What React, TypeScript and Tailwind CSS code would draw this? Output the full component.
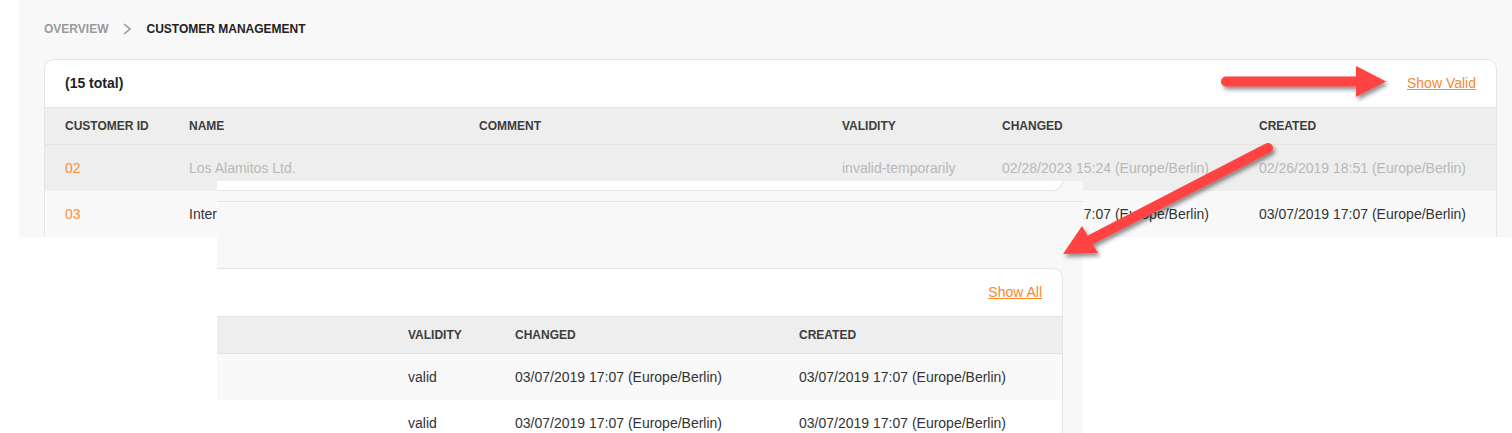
import React from "react";

const ORANGE = "text-[#f7882f]";

function Chevron() {
  return (
    <svg width="10" height="12" viewBox="0 0 10 12" className="mx-[14px]">
      <polyline points="2,1 8,6 2,11" fill="none" stroke="#9a9a9a" strokeWidth="1.6" />
    </svg>
  );
}

const topCols = "grid grid-cols-[124px_290px_363px_160px_257px_1fr] items-center pl-[20px]";
const ovCols = "grid grid-cols-[220px_107px_284px_1fr] items-center";

function TopCard() {
  return (
    <div className="mt-[23px] overflow-hidden rounded-[10px] border border-[#e6e4e0] bg-white">
      <div className="flex h-[47px] items-center justify-between px-[20px]">
        <span className="text-[14px] font-bold text-[#222]">(15 total)</span>
        <span className={`text-[14px] underline ${ORANGE}`}>Show Valid</span>
      </div>
      <div className={`${topCols} h-[38px] border-y border-[#e6e4e0] bg-[#eeeeee] text-[12px] font-bold text-[#3d3d3d]`}>
        <span>CUSTOMER ID</span>
        <span>NAME</span>
        <span>COMMENT</span>
        <span>VALIDITY</span>
        <span>CHANGED</span>
        <span>CREATED</span>
      </div>
      <div className={`${topCols} h-[46px] bg-[#eeeeee] text-[14px] text-[#b8b8b8]`}>
        <span className="text-[#f8903c]">02</span>
        <span>Los Alamitos Ltd.</span>
        <span></span>
        <span>invalid-temporarily</span>
        <span className="whitespace-nowrap">02/28/2023 15:24 (Europe/Berlin)</span>
        <span className="whitespace-nowrap">02/26/2019 18:51 (Europe/Berlin)</span>
      </div>
      <div className={`${topCols} h-[46px] bg-[#f9f9f9] text-[14px] text-[#333]`}>
        <span className="text-[#f8903c]">03</span>
        <span className="whitespace-nowrap">International Trade Ltd.</span>
        <span></span>
        <span>valid</span>
        <span className="whitespace-nowrap">03/07/2019 17:07 (Europe/Berlin)</span>
        <span className="whitespace-nowrap">03/07/2019 17:07 (Europe/Berlin)</span>
      </div>
      <div className="h-[46px] bg-white" />
    </div>
  );
}

function Overlay() {
  return (
    <div className="absolute left-[217px] top-[181px] h-[252px] w-[866px] overflow-hidden bg-[#f8f8f8]">
      <div className="-ml-[20px] mr-[20px] h-[10px] rounded-br-[10px] border-b border-r border-[#e6e4e0] bg-white" />
      <div className="mt-[10px] h-[1px] bg-[#e6e4e0]" />
      <div className="-ml-[30px] mr-[20px] mt-[66px] rounded-[10px] border border-[#e6e4e0] bg-white">
        <div className="flex h-[47px] items-center justify-end px-[20px]">
          <span className={`text-[14px] underline ${ORANGE}`}>Show All</span>
        </div>
        <div className={`${ovCols} h-[38px] border-y border-[#e6e4e0] bg-[#eeeeee] text-[12px] font-bold text-[#3d3d3d]`}>
          <span></span>
          <span>VALIDITY</span>
          <span>CHANGED</span>
          <span>CREATED</span>
        </div>
        <div className={`${ovCols} h-[46px] bg-[#f9f9f9] text-[14px] text-[#333]`}>
          <span></span>
          <span>valid</span>
          <span className="whitespace-nowrap">03/07/2019 17:07 (Europe/Berlin)</span>
          <span className="whitespace-nowrap">03/07/2019 17:07 (Europe/Berlin)</span>
        </div>
        <div className={`${ovCols} h-[46px] bg-white text-[14px] text-[#333]`}>
          <span></span>
          <span>valid</span>
          <span className="whitespace-nowrap">03/07/2019 17:07 (Europe/Berlin)</span>
          <span className="whitespace-nowrap">03/07/2019 17:07 (Europe/Berlin)</span>
        </div>
      </div>
    </div>
  );
}

function Arrows() {
  const red = "#ff4343";
  return (
    <svg
      className="pointer-events-none absolute left-0 top-0"
      width="1512"
      height="433"
      viewBox="0 0 1512 433"
    >
      <defs>
        <filter id="sh" x="-20%" y="-20%" width="140%" height="140%">
          <feDropShadow dx="2" dy="3" stdDeviation="2.2" floodColor="#000" floodOpacity="0.45" />
        </filter>
      </defs>
      <g filter="url(#sh)">
        <line x1="1226" y1="81.5" x2="1360" y2="81.5" stroke={red} strokeWidth="10" strokeLinecap="round" />
        <polygon points="1356,66 1386,81.5 1356,97" fill={red} />
      </g>
      <g filter="url(#sh)">
        <line x1="1268" y1="148" x2="1092" y2="239" stroke={red} strokeWidth="10" strokeLinecap="round" />
        <polygon points="1082,226 1098,253 1063,254" fill={red} />
      </g>
    </svg>
  );
}

export default function App() {
  return (
    <div className="relative h-[433px] w-[1512px] overflow-hidden bg-white font-['Liberation_Sans',Arial,sans-serif]">
      <div className="ml-[19px] h-[237px] overflow-hidden bg-[#f8f8f8] pl-[25px] pr-[15px]">
        <div className="mt-[22px] flex h-[14px] items-center text-[12px] font-bold">
          <span className="text-[#9a9a9a]">OVERVIEW</span>
          <Chevron />
          <span className="text-[#222]">CUSTOMER MANAGEMENT</span>
        </div>
        <TopCard />
      </div>
      <Overlay />
      <Arrows />
    </div>
  );
}
